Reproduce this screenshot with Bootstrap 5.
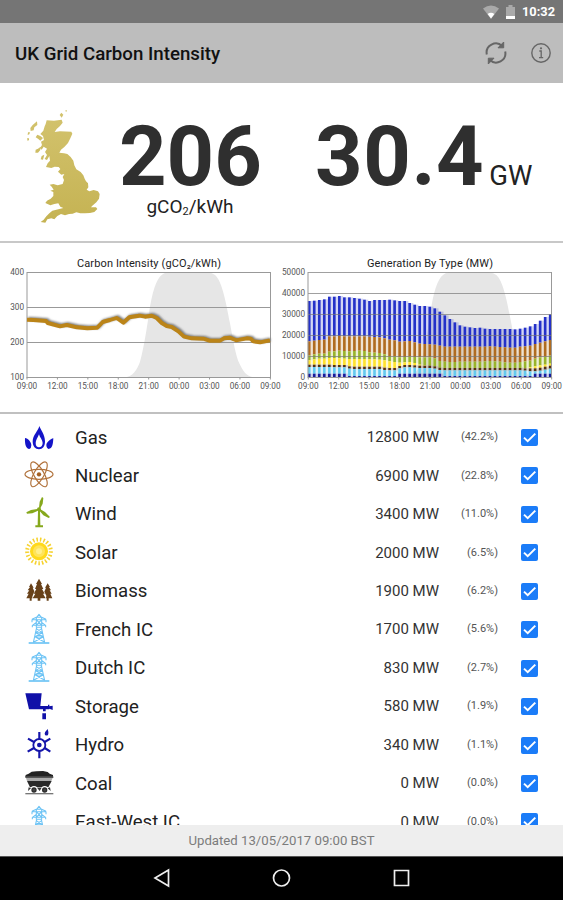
<!DOCTYPE html>
<html lang="en">
<head>
<meta charset="utf-8">
<meta name="viewport" content="width=device-width, initial-scale=1">
<title>UK Grid Carbon Intensity</title>
<link href="https://cdn.jsdelivr.net/npm/bootstrap@5.3.0/dist/css/bootstrap.min.css" rel="stylesheet">
<style>
body{font-family:Roboto,"Noto Sans",sans-serif;color:#222;background:#fff}
.screen{height:900px}
.status-bar{height:23px;background:#757575;font-size:12.8px;font-weight:700;line-height:23px;padding-right:8px;gap:7px}
.app-bar{height:60px;background:#bdbdbd;padding:0 11px 0 15px}
.app-title{font-size:18.7px;font-weight:500;color:#111;line-height:24px;padding-top:2px}
.app-actions{gap:22px}
.summary{height:160px;border-bottom:2px solid #c8c8c8;padding:30px 0 0 25px}
.land-map{margin-top:-5px}
.reading{font-size:83px;font-weight:700;line-height:87px;color:#2f2f2f}
.intensity{width:142px;margin-left:17px}
.power{margin-left:54px}
.power .reading{letter-spacing:.6px}
.unit{font-size:19px;line-height:22px;color:#222;margin-top:-4px}
.unit sub{font-size:11px;bottom:-.2em}
.unit-gw{font-size:27.5px;margin-left:5px;color:#222}
.charts{height:171px;border-bottom:2px solid #c0c0c0}
.charts svg text{font-family:Roboto,sans-serif}
.axis{font-size:8.2px;fill:#555}
.chart-title{font-size:11px;fill:#222}
.sources{padding-top:4.3px;min-height:0}
.source-row{height:38.45px;padding-left:23px;padding-right:25px}
.source-icon{width:32px;height:32px;overflow:visible}
.source-name{font-size:18.6px;margin-left:20px;padding-top:2px}
.source-mw{font-size:15px;color:#333}
.source-pct{font-size:11px;width:59px;color:#555}
.tick-box{width:17px;height:17px;border-radius:2px;background:#1b7cf8;margin-left:23px}
.updated{height:31px;background:#eee;color:#7c7c7c;font-size:13.2px}
.system-nav{height:44px;background:#000;border-top:1px solid #555;padding:0 1px 2px 0}
</style>
</head>
<body>
<svg class="d-none">
  <symbol id="pylon" viewBox="0 0 96 96" overflow="visible">
    <g fill="none" stroke="#6cc3f5" stroke-width="3.2" stroke-linejoin="round">
      <path d="M41 10 48 1 55 10M40 10H56V40H40ZM27 16 40 10M69 16 56 10M26 17H70M27 17V25M69 17V25M28 34H68M28 34 40 25M68 34 56 25M28 34V40M68 34V40M40 17 56 34M56 17 40 34"/>
      <path d="M41 40 31 86M55 40 65 86M40 44 58 56 36 68 64 84M56 44 38 56 61 68 33 84M38 56H58M35 69H61"/>
      <path d="M17 87H79" stroke-width="5"/>
    </g>
  </symbol>
</svg>
<div class="screen d-flex flex-column overflow-hidden">
  <div class="status-bar d-flex align-items-center justify-content-end text-white flex-shrink-0">
    <svg width="16" height="14" viewBox="0 0 16 14"><path d="M0 3.6Q8-2.4 16 3.6L8 14Z" fill="#a9a9a9"/><path d="M4.6 9Q8 6.7 11.4 9L8 13.4Z" fill="#fff"/></svg>
    <svg width="9" height="14" viewBox="0 0 9 14"><path d="M0 2H2.5V0H6.5V2H9V14H0Z" fill="#a9a9a9"/><path d="M0 11H9V14H0Z" fill="#fff"/></svg>
    <span>10:32</span>
  </div>
  <header class="app-bar d-flex align-items-center justify-content-between flex-shrink-0">
    <div class="app-title">UK Grid Carbon Intensity</div>
    <div class="app-actions d-flex align-items-center">
      <svg width="24" height="24" viewBox="0 0 24 24" fill="none" stroke="#666" stroke-width="2"><path d="M2.8 13.5A9.2 9.2 0 0 1 18.3 5.2M21.2 10.5A9.2 9.2 0 0 1 5.7 18.8"/><path d="M19.7 1V6.8H14ZM4.3 23V17.2H10Z" fill="#666" stroke-width="1"/></svg>
      <svg width="22" height="22" viewBox="0 0 22 22" fill="none" stroke="#666"><circle cx="11" cy="11" r="9.2" stroke-width="1.4"/><path d="M9.300 9H11.2V15.6M9 15.6H13.2" stroke-width="1.3"/><circle cx="11" cy="6.3" r="1.1" fill="#666" stroke="none"/></svg>
    </div>
  </header>

  <section class="summary d-flex flex-shrink-0">
    <svg width="77" height="117" viewBox="45 40 231 351" class="land-map flex-shrink-0">
      <defs><linearGradient id="land" x2="0" y2="1"><stop stop-color="#d3c36e"/><stop offset="1" stop-color="#c5b353"/></linearGradient></defs>
      <path fill="url(#land)" d="M110 77 132 78 155 75 158 84 150 94 140 103 134 112 150 110 184 111 187 117 181 131 174 145 163 157 153 165 148 174 162 176 172 178 182 187 190 198 193 212 199 224 212 232 220 242 224 252 228 260 234 266 235 278 230 285 238 290 251 286 264 290 269 298 267 312 259 323 247 333 243 338 258 338 262 343 253 352 240 355 225 356 211 356 199 353 188 357 177 358 165 362 153 358 142 364 133 374 124 371 112 374 106 384 92 382 101 375 109 365 118 356 127 348 145 344 160 340 151 336 145 326 133 328 121 332 106 325 111 318 122 312 130 304 130 292 121 288 131 285 125 276 119 270 130 268 143 272 158 268 162 256 158 247 163 238 154 240 144 231 151 223 146 217 134 216 124 220 108 217 113 206 120 198 118 184 111 196 104 193 111 181 105 172 111 162 101 156 95 165 90 160 96 151 93 141 102 136 99 124 91 118 100 108 104 95 107 88ZM81 80 82 91 73 98 71 107 62 109 61 100 68 91ZM82 120 91 124 99 130 91 138 84 132 77 128ZM154 54 160 60 155 69 149 61ZM84 162 91 157 91 166 84 174 76 174 77 165ZM95 184 103 180 99 195 92 194ZM54 113 60 113 58 119 53 121ZM51 131 57 131 57 136 53 139ZM165 48 171 46 169 52Z"/>
    </svg>
    <div class="intensity text-center">
      <div class="reading">206</div>
      <div class="unit">gCO<sub>2</sub>/kWh</div>
    </div>
    <div class="power d-flex align-items-baseline align-self-start">
      <span class="reading">30.4</span><span class="unit-gw">GW</span>
    </div>
  </section>

  <section class="charts d-flex flex-shrink-0">
    <svg width="281" height="169" viewBox="0 243 281 169" overflow="visible">
      <defs>
        <filter id="soft" x="-10%" y="-30%" width="120%" height="160%"><feGaussianBlur stdDeviation="0.9"/></filter>
        <path id="night" d="M125 377.3C133 376.500 137 370 140 361.700C144 347 147 327 149 313.300C152 293 156 279 162 274.700Q164 272.700 167 272.700H208Q212 272.700 215 275C222 281 226 302 230 323.300C233 340 236 357 239.300 363.300C243 371 246 376 253 377.300Z" fill="#e6e6e6"/>
      </defs>
      <text class="chart-title" x="77" y="267" textLength="144">Carbon Intensity (gCO₂/kWh)</text>
      <use href="#night"/>
      <path d="M27 272.500H270.500M27 307.500H270.500M27 342.500H270.500M27 377.500H270.500" stroke="#999" fill="none"/>
      <path d="M27 272V378M270.500 272V378" stroke="#999" fill="none"/>
      <path transform="translate(1.300 249)" filter="url(#soft)" d="M27 69.700 33.300 70 46 71 47.700 73 60 76.300 66.700 75 76.700 77.300 87.300 78.300 97.300 77.700 102.700 72 110 70 116.700 68 123.300 72.700 129.300 67.300 139.300 65.700 145 66.700 151.700 65.700 156.700 68 161.700 73 166.700 76 171.700 77 178.300 81.300 184 86.700 191.700 88.300 203.300 88.700 209.300 90.700 220 90.700 224 88.300 230 87.700 236 90.300 246.700 88.300 250.700 88.700 253.300 91.300 260 92.300 269 90.500" fill="none" stroke="#777" stroke-width="3.600" stroke-linejoin="round"/>
      <path transform="translate(0 250)" d="M27 69.700 33.300 70 46 71 47.700 73 60 76.300 66.700 75 76.700 77.300 87.300 78.300 97.300 77.700 102.700 72 110 70 116.700 68 123.300 72.700 129.300 67.300 139.300 65.700 145 66.700 151.700 65.700 156.700 68 161.700 73 166.700 76 171.700 77 178.300 81.300 184 86.700 191.700 88.300 203.300 88.700 209.300 90.700 220 90.700 224 88.300 230 87.700 236 90.300 246.700 88.300 250.700 88.700 253.300 91.300 260 92.300 270 90.300" fill="none" stroke="#bb8418" stroke-width="3.900" stroke-linejoin="round"/>
      <g class="axis" text-anchor="end"><text x="24" y="275.300">400</text><text x="24" y="310.300">300</text><text x="24" y="345.300">200</text><text x="24" y="380.300">100</text></g>
      <g class="axis hours" text-anchor="middle" data-start="27"></g>
    </svg>
    <svg width="282" height="169" viewBox="281 243 282 169">
      <text class="chart-title" x="367" y="267" textLength="126">Generation By Type (MW)</text>
      <use href="#night" x="281.300"/>
      <g id="stack"></g>
      <path d="M308 272.500H552M308 293.500H552M308 314.500H552M308 335.500H552M308 356.500H552" stroke="#777" stroke-opacity=".7" fill="none"/>
      <path d="M308 377.500H552M308 272V378M551.500 272V378" stroke="#999" fill="none"/>
      <g class="axis" text-anchor="end"><text x="305" y="275.300">50000</text><text x="305" y="296.300">40000</text><text x="305" y="317.300">30000</text><text x="305" y="338.300">20000</text><text x="305" y="359.300">10000</text><text x="305" y="380.300">0</text></g>
      <g class="axis hours" text-anchor="middle" data-start="308.300"></g>
    </svg>
  </section>

  <main class="sources flex-grow-1 overflow-hidden" id="sources"></main>
  <footer class="updated d-flex align-items-center justify-content-center flex-shrink-0">Updated 13/05/2017 09:00 BST</footer>
  <nav class="system-nav d-flex justify-content-center align-items-center flex-shrink-0">
    <svg width="280" height="20" viewBox="0 0 280 20" fill="none" stroke="#eee" stroke-width="1.700"><path d="M27.500 2V18L14 10Z"/><circle cx="140.500" cy="10" r="8"/><path d="M253.500 2.500H267.500V17.500H253.500Z"/></svg>
  </nav>
</div>

<svg class="d-none" id="icons">
  <g data-icon="Gas" fill="#1414c8"><path fill-rule="evenodd" d="M49 12C52 22 66 37 66 58 66 74 59 82 48 82S29 74 29 58C29 40 46 26 49 12ZM48 37C44 47 38 55 38 63 38 72 42 76 48 76S59 71 59 63C59 54 50 46 48 37Z"/><path d="M6 48C15 49 25 60 25 70Q25 79 19 81C9 80 5 67 6 48ZM91 49C82 51 70 61 70 70Q71 80 77 81C88 80 90 67 91 49Z"/></g>
  <g data-icon="Nuclear" fill="none" stroke="#b0713a" stroke-width="3.500"><ellipse cx="48" cy="43" rx="42" ry="15"/><ellipse cx="48" cy="43" rx="42" ry="15" transform="rotate(60 48 43)"/><ellipse cx="48" cy="43" rx="42" ry="15" transform="rotate(120 48 43)"/><circle cx="48" cy="43" r="6.500" fill="#a35f22" stroke="none"/></g>
  <g data-icon="Wind" fill="#86a81c"><circle cx="48" cy="34" r="6"/><path d="M45 38H51L52 82H60V88H37V82H44ZM48 29 50 11 57-3 61 0 59 17 52 31ZM43 33 24 36 10 43 12 47 28 46 45 38ZM52 34 66 42 81 57 77 60 61 52 50 39Z"/></g>
  <g data-icon="Solar"><circle cx="48" cy="43" r="35.500" fill="none" stroke="#f6d22c" stroke-width="12" stroke-dasharray="4.500 6.060"/><circle cx="48" cy="43" r="27" fill="#ffd91c"/><circle cx="48" cy="43" r="18" fill="#ffe45a"/><circle cx="48" cy="43" r="9" fill="#fff08c"/></g>
  <g data-icon="Biomass" fill="#684119"><path d="M48 11 57 27H54L61 42H57L65 56H60L68 70H52V77H44V70H29L37 56H32L40 42H36L42 27H39ZM24 25 32 38H29L34 49 28 65V70H26V77H20V70H10L17 56H12L19 46H14L21 36H18ZM74 25 81 36H78L84 46H80L86 56H82L88 70H77V77H71V70H69L70 62 64 50 69 38H66Z"/></g>
  <g data-icon="Pylon"><use href="#pylon" width="96" height="96"/></g>
  <g data-icon="Storage" fill="#1010a8"><path d="M7 7H56L52 45H75V41H79V46L89 44V57L79 53V55H68V61H60V55H18ZM58 67H69V85H58Z"/></g>
  <g data-icon="Hydro" fill="none" stroke="#1515aa" stroke-width="5.500"><circle cx="49" cy="48" r="18"/><circle cx="49" cy="48" r="7" fill="#1515aa" stroke="none"/><path stroke-width="6.500" d="M49 30V9M49 66V88M33 39 15 29M33 57 14 68M65 57 82 68M65 39 82 29"/><path d="M74 0Q77 10 76 14A5.500 5.500 0 0 1 65 14Q65 9 74 0Z" fill="#1515aa" stroke="none"/></g>
  <g data-icon="Coal"><path d="M8 24 17 20 26 14 40 13 60 12 74 15 80 20 90 24V30H7Z" fill="#222"/><path d="M7 28H91V33H7Z" fill="#555"/><path d="M9 33H89L85 42H12Z" fill="#aaa"/><path d="M12 42H86L76 61H21Z" fill="#292929"/><circle cx="33" cy="68" r="11" fill="#fff"/><circle cx="65" cy="68" r="11" fill="#fff"/><g fill="#444" stroke="#2c2c2c" stroke-width="4"><circle cx="33" cy="69" r="6"/><circle cx="65" cy="69" r="6"/></g><path d="M17 61 15 72 24 64ZM81 61 83 72 74 64ZM42 62H56L50 72Z" fill="#333"/><path d="M7 80H91" stroke="#777" stroke-width="4"/></g>
</svg>
<script>
const sources=[["Gas","Gas","12800","42.2"],["Nuclear","Nuclear","6900","22.8"],["Wind","Wind","3400","11.0"],["Solar","Solar","2000","6.5"],["Biomass","Biomass","1900","6.2"],["French IC","Pylon","1700","5.6"],["Dutch IC","Pylon","830","2.7"],["Storage","Storage","580","1.9"],["Hydro","Hydro","340","1.1"],["Coal","Coal","0","0.0"],["East-West IC","Pylon","0","0.0"]];
const icons=document.getElementById("icons");
document.getElementById("sources").innerHTML=sources.map(([name,icon,mw,pct])=>`
  <div class="source-row d-flex align-items-center">
    <svg class="source-icon flex-shrink-0" viewBox="0 0 96 96">${icons.querySelector(`[data-icon="${icon}"]`).outerHTML}</svg>
    <span class="source-name flex-grow-1">${name}</span>
    <span class="source-mw">${mw} MW</span>
    <span class="source-pct text-end">(${pct}%)</span>
    <span class="tick-box d-flex"><svg width="17" height="17" viewBox="0 0 17 17"><path d="M3 8.600 6.700 12.200 14.300 4.600" fill="none" stroke="#fff" stroke-width="2"/></svg></span>
  </div>`).join("");

document.querySelectorAll(".hours").forEach(g=>{
  const start=+g.dataset.start;
  g.innerHTML=["09:00","12:00","15:00","18:00","21:00","00:00","03:00","06:00","09:00"].map((t,i)=>`<text x="${start+i*30.42}" y="388.500">${t}</text><path d="M${start+i*30.42} 377V379.500" stroke="#999"/>`).join("");
});

// Half-hourly layer edges, top to bottom, in thirds of a pixel below y=250.
const top_=[153,152,150,148,140,140,138,142,142,144,146,149,153,150,150,150,149,151,153,153,159,164,168,168,170,175,185,196,207,217,226,230,232,234,233,236,237,237,237,237,237,238,236,233,229,222,212,201,193];
const gas=[274,272,270,269,259,259,258,259,259,259,259,259,260,261,262,265,269,271,275,274,273,277,281,282,283,284,287,290,290,290,290,290,290,290,290,290,289,290,291,292,293,293,290,289,287,282,278,274,270];
const nuclear=[316,313,311,311,305,304,302,303,304,303,302,303,307,308,309,313,318,319,322,321,320,321,322,322,322,325,333,335,336,336,335,335,335,335,335,334,333,334,335,337,338,338,336,334,332,326,322,320,317];
const wind=[331,328,326,326,324,324,325,326,327,327,327,327,328,328,329,331,334,336,338,337,336,339,344,346,347,349,353,354,354,354,354,354,354,354,354,354,354,354,354,354,354,354,354,354,352,349,346,344,341];
const solar=[344,344,344,344,344,345,345,345,349,350,350,350,350,350,350,353,354,354,348,345,345,346,347,347,347,349,353,354,354,354,354,354,354,354,354,354,354,354,354,354,354,354,354,355,355,355,353,350,347];
const colors=["#2431c9","#b06c20","#99b42b","#ffe22e","#553012","#64c9ee","#181c9c"];
document.getElementById("stack").innerHTML=top_.map((t,i)=>{
  const bio=solar[i]+(i>43?9:7);
  const deep=i<8||(i>17&&i<27)||i>44?371:378;
  const edges=[t,gas[i],nuclear[i],wind[i],solar[i],bio,deep,382];
  const x=308+i*5.02;
  return colors.map((c,k)=>{
    const y=250+edges[k]/3,h=(edges[k+1]-edges[k])/3;
    if(h<=0)return "";
    const gap=i<48?`<rect x="${x+2.6}" y="${y}" width="2.420" height="${h}" fill="${c}" opacity=".2"/>`:"";
    return gap+`<rect x="${x-.1}" y="${y}" width="2.700" height="${h}" fill="${c}"/>`;
  }).join("");
}).join("");
</script>
<script src="https://cdn.jsdelivr.net/npm/bootstrap@5.3.0/dist/js/bootstrap.bundle.min.js"></script>
</body>
</html>
